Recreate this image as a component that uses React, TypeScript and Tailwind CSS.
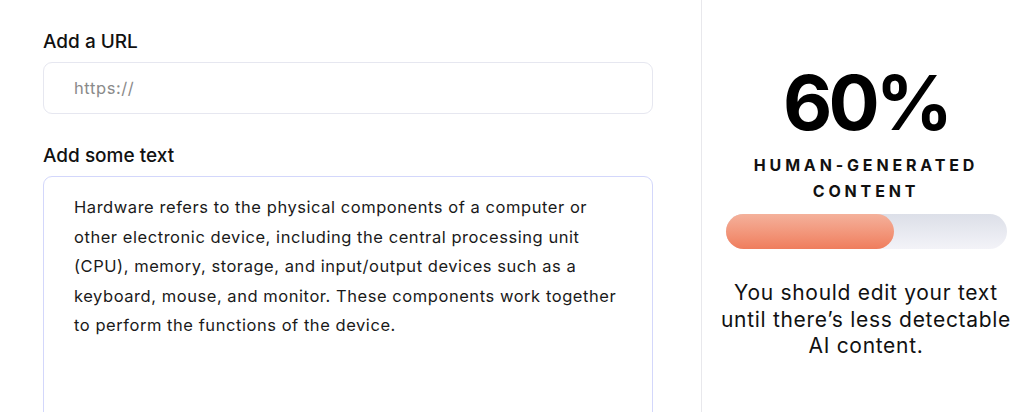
import React from "react";

const TEXT =
  "Hardware refers to the physical components of a computer or other electronic device, including the central processing unit (CPU), memory, storage, and input/output devices such as a keyboard, mouse, and monitor. These components work together to perform the functions of the device.";

export default function App() {
  return (
    <div className="flex h-[412px] w-[1024px] overflow-hidden bg-white text-[#111111] font-['Inter','Noto_Sans',sans-serif]">
      {/* Left panel */}
      <div className="flex w-[701px] shrink-0 flex-col pl-[43px] pr-[48px] pt-[28px]">
        <label className="shrink-0 text-[19px] leading-[28px] font-medium text-[#111]">Add a URL</label>
        <input
          type="text"
          placeholder="https://"
          className="mt-[6px] h-[52px] w-full shrink-0 rounded-[9px] border border-[#e6e7f0] bg-white pl-[30px] text-[16.5px] tracking-[0.6px] text-[#222] placeholder:text-[#8a8a8a] outline-none font-['Inter',sans-serif]"
        />
        <label className="mt-[28px] shrink-0 text-[19px] leading-[28px] font-medium text-[#111]">
          Add some text
        </label>
        <textarea
          readOnly
          defaultValue={TEXT}
          className="mt-[6px] h-[260px] w-full shrink-0 resize-none overflow-hidden rounded-[9px] border border-[#d3d7fb] bg-white pl-[30px] pr-[24px] pt-[16px] text-[16.5px] leading-[29.6px] tracking-[0.55px] text-[#1a1a1a] outline-none font-['Inter',sans-serif]"
        />
      </div>

      {/* Right panel */}
      <div className="flex min-w-0 flex-1 flex-col items-center border-l border-[#e8e8ec] pl-[24px] pr-[18px] pt-[62px]">
        <div className="text-[76px] leading-[80px] font-bold tracking-[-4px] text-black">60%</div>
        <div className="mt-[10px] whitespace-nowrap text-center text-[16px] leading-[26px] font-bold tracking-[0.24em] text-[#111]">
          HUMAN-GENERATED
          <br />
          CONTENT
        </div>
        <div className="mt-[10px] h-[35px] w-[281px] shrink-0 rounded-full bg-gradient-to-b from-[#dcdfe8] to-[#f3f3f8]">
          <div
            className="h-full rounded-full bg-gradient-to-b from-[#f4b19b] to-[#ef7d5d]"
            style={{ width: "60%" }}
          />
        </div>
        <div className="mt-[31px] whitespace-nowrap text-center text-[21px] leading-[26.5px] tracking-[0.7px] text-[#111]">
          You should edit your text
          <br />
          until there’s less detectable
          <br />
          AI content.
        </div>
      </div>
    </div>
  );
}
